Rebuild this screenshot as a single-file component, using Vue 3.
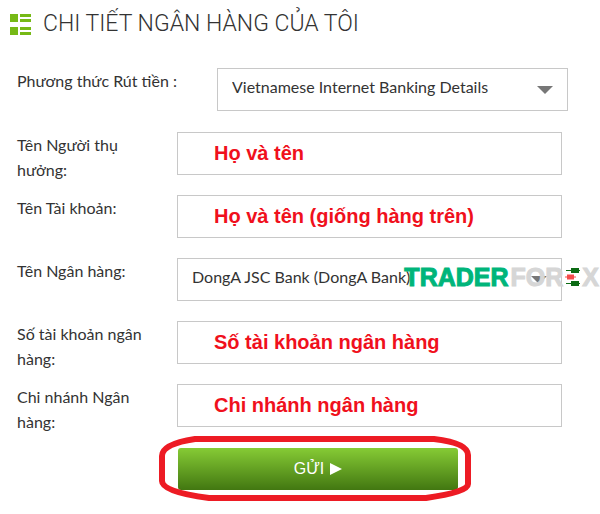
<template>
  <main class="bank-page">
    <header class="title">
      <svg class="title-icon" viewBox="0 0 21 21" aria-hidden="true">
        <path d="M0 0h8v8H0zM0 13h8v8H0zM10 0h11v3H10zM10 5h11v3H10zM10 13h11v3H10zM10 18h11v3H10z" fill="#76b916" />
      </svg>
      <h1>CHI TIẾT NGÂN HÀNG CỦA TÔI</h1>
    </header>

    <form class="bank-form" @submit.prevent>
      <div v-for="field in fields" :key="field.id" class="row" :class="{ method: field.id === 'method' }">
        <label :for="field.id">{{ field.label }}</label>
        <div class="control">
          <template v-if="field.options">
            <select :id="field.id" v-model="field.value">
              <option v-for="option in field.options" :key="option">{{ option }}</option>
            </select>
            <svg class="arrow" viewBox="0 0 16 8" aria-hidden="true">
              <path d="M0 0h16L8 8z" fill="#777" />
            </svg>
          </template>
          <input v-else :id="field.id" v-model="field.value" type="text">
          <!-- Brand mark lies over the bank drop-down -->
          <div v-if="field.id === 'bank'" class="brand">
            <span class="trader">TRADER</span>
            <span class="forex">FOR</span>
            <svg viewBox="0 0 15 18" aria-label="E">
              <path d="M1 2.5h14M1 15.5h14" stroke="#0b6b14" />
              <path d="M6 0h8v5H6zM6 13h8v5H6z" fill="#0b6b14" />
              <path d="M0 9h11" stroke="#f44b4b" />
              <path d="M2 6.5h7v5H2z" fill="#f44b4b" />
            </svg>
            <span class="forex">X</span>
          </div>
        </div>
      </div>

      <div class="actions">
        <button type="submit">
          GỬI
          <svg viewBox="0 0 12 12" aria-hidden="true"><path d="M0 0l12 6-12 6z" fill="#fff" /></svg>
        </button>
        <svg class="ring" viewBox="0 0 312 66" preserveAspectRatio="none" aria-hidden="true">
          <path d="M36 3H275Q309 7 309 19V48Q309 56 267 62H50Q3 56 3 45V20Q3 8 36 3Z" />
        </svg>
      </div>
    </form>
  </main>
</template>

<script setup>
import { ref } from 'vue';

const methodName = 'Vietnamese Internet Banking Details';
const bankName = 'DongA JSC Bank (DongA Bank)';

const fields = ref([
  { id: 'method', label: 'Phương thức Rút tiền :', value: methodName, options: [methodName] },
  { id: 'holder', label: 'Tên Người thụ hưởng:', value: 'Họ và tên' },
  { id: 'account', label: 'Tên Tài khoản:', value: 'Họ và tên (giống hàng trên)' },
  { id: 'bank', label: 'Tên Ngân hàng:', value: bankName, options: [bankName] },
  { id: 'number', label: 'Số tài khoản ngân hàng:', value: 'Số tài khoản ngân hàng' },
  { id: 'branch', label: 'Chi nhánh Ngân hàng:', value: 'Chi nhánh ngân hàng' }
]);
</script>

<style>
body {
  background: #fff;
}
</style>

<style scoped>
.bank-page {
  padding: 8px 38px 12px 17px;
  color: #333;
  font-family: Lato, "Noto Sans", sans-serif;
  font-size: 16px;
  overflow: hidden;
}

.title {
  display: flex;
  align-items: center;
  gap: 12px;
  height: 32px;
  margin-left: -7px;
}

.title-icon {
  width: 21px;
  height: 21px;
}

h1 {
  margin: 0;
  font-family: Roboto, sans-serif;
  font-size: 23px;
  font-weight: 300;
  line-height: 32px;
  white-space: nowrap;
}

.bank-form {
  padding-top: 28px;
}

.row {
  display: grid;
  grid-template-columns: 144px 1fr;
  column-gap: 16px;
  min-height: 63px;
}

.row.method {
  grid-template-columns: 184px 1fr;
  margin-right: -6px;
  min-height: 64px;
}

label {
  line-height: 25px;
}

.control {
  position: relative;
  height: 43px;
}

input,
select {
  box-sizing: border-box;
  width: 100%;
  height: 43px;
  margin: 0;
  border: 1px solid #c8c8c8;
  border-radius: 0;
  background: #fff;
  outline: none;
}

input {
  padding: 0 36px;
  color: #f0101c;
  font: bold 20px "Liberation Sans", Arial, sans-serif;
}

select {
  appearance: none;
  padding: 0 36px 6px 14px;
  color: #333;
  font: inherit;
}

.arrow {
  position: absolute;
  top: 18px;
  right: 15px;
  width: 16px;
  height: 8px;
  pointer-events: none;
}

.brand {
  position: absolute;
  top: 9px;
  right: -37px;
  display: flex;
  align-items: center;
  gap: 2px;
  font: bold 25px/20px "Liberation Sans", Arial, sans-serif;
  -webkit-text-stroke: 1px currentColor;
  pointer-events: none;
}

.brand svg {
  width: 15px;
  height: 18px;
}

.trader {
  color: #00b57a;
}

.forex {
  color: #d6d6d6;
}

.actions {
  position: relative;
  width: 280px;
  margin: 1px 0 0 161px;
}

button {
  display: flex;
  align-items: center;
  justify-content: center;
  gap: 6px;
  width: 100%;
  height: 42px;
  border: 0;
  border-radius: 3px;
  background: linear-gradient(#86cb35, #427711);
  color: #fff;
  font: 16px "Liberation Sans", Arial, sans-serif;
}

button svg {
  width: 12px;
  height: 12px;
}

.ring {
  position: absolute;
  top: -12px;
  left: -19px;
  width: 312px;
  height: 66px;
  pointer-events: none;
}

.ring path {
  fill: none;
  stroke: #ed1b24;
  stroke-width: 6px;
}
</style>
